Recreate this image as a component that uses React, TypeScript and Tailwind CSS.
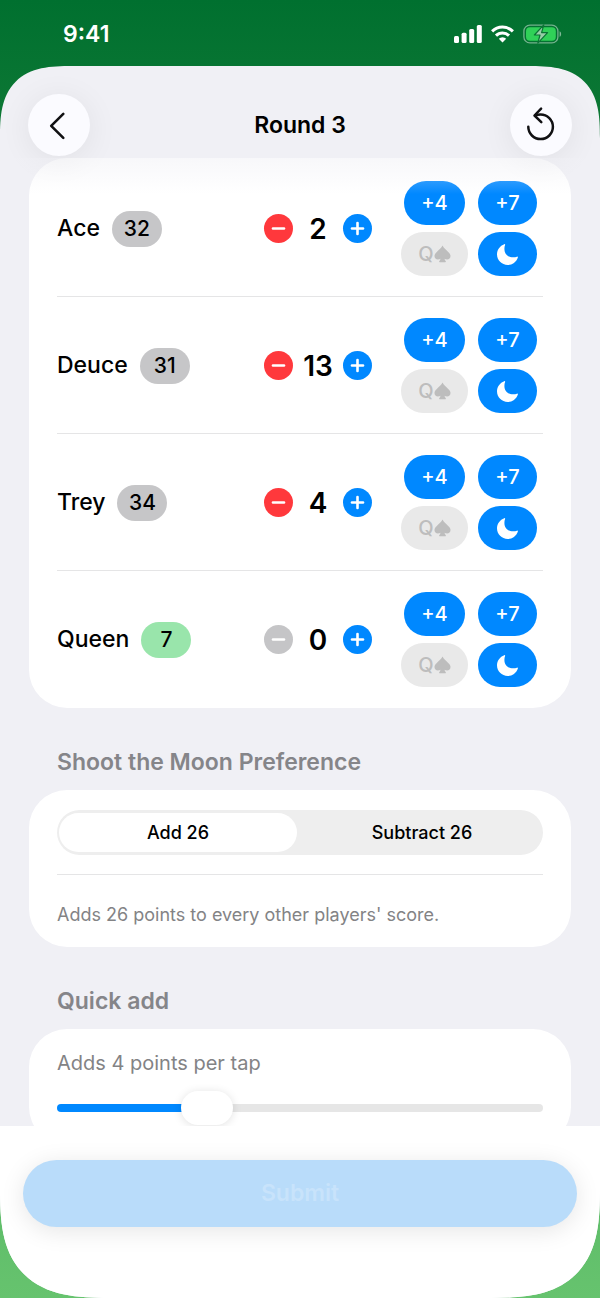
import React, { useState } from 'react';

type Player = {
  name: string;
  total: number;
  points: number;
};

type MoonPreference = 'add' | 'subtract';

const ROUND_POINTS = 26;
const QUEEN_POINTS = 13;
const QUICK_MIN = 2;
const QUICK_MAX = 9;

const INITIAL_PLAYERS: Player[] = [
  { name: 'Ace', total: 32, points: 2 },
  { name: 'Deuce', total: 31, points: 13 },
  { name: 'Trey', total: 34, points: 4 },
  { name: 'Queen', total: 7, points: 0 },
];

export default function App() {
  const [players, setPlayers] = useState<Player[]>(INITIAL_PLAYERS);
  const [moon, setMoon] = useState<MoonPreference>('add');
  const [quickAdd, setQuickAdd] = useState(4);

  const remaining = ROUND_POINTS - players.reduce((sum, p) => sum + p.points, 0);
  const lowest = Math.min(...players.map((p) => p.total));

  const addPoints = (name: string, amount: number) => {
    setPlayers(players.map((p) => (p.name === name ? { ...p, points: p.points + amount } : p)));
  };

  const shootMoon = (name: string) => {
    setPlayers(
      players.map((p) => {
        if (moon === 'add') return { ...p, points: p.name === name ? 0 : ROUND_POINTS };
        return { ...p, points: p.name === name ? -ROUND_POINTS : 0 };
      })
    );
  };

  // share of the track that lies left of the 52px thumb's centre
  const ratio = (quickAdd - QUICK_MIN) / (QUICK_MAX - QUICK_MIN);
  const fill = `calc((100% - 52px) * ${ratio} + 26px)`;

  return (
    <div className="flex flex-col h-screen bg-linear-to-b from-[#00702f] via-[#329a4d] to-[#66c36e] font-['Inter','Liberation_Sans',sans-serif] text-black">
      <StatusBar />

      <div className="flex-1 min-h-0 flex flex-col bg-[#f0f0f5] rounded-t-[72px] rounded-b-[110px] [corner-shape:superellipse(1.5)] overflow-hidden">
        <header className="relative z-10 h-[92px] shrink-0 flex items-center justify-between px-7 pt-[26px]">
          <RoundButton label="Back">
            <svg width="30" height="30" viewBox="0 0 30 30" fill="none" stroke="#111113" strokeWidth="2.6" strokeLinecap="round" strokeLinejoin="round">
              <path d="M19.3 3.8 L7.2 15.8 L19.3 27.8" />
            </svg>
          </RoundButton>
          <h1 className="text-[23px] font-semibold">Round 3</h1>
          <RoundButton label="Reset round" onClick={() => setPlayers(INITIAL_PLAYERS)}>
            <svg width="34" height="38" viewBox="0 0 34 38" fill="none" stroke="#111113" strokeWidth="2.5" strokeLinecap="round" strokeLinejoin="round">
              <path d="M4.3 20.8 A12.3 12.3 0 1 0 16.6 8.5 C14.7 8.5 12.7 8.8 11.1 9.4" />
              <path d="M17.1 2.7 L10.5 9.5 L17.3 16.1" />
            </svg>
          </RoundButton>
          <div className="absolute inset-x-0 top-full h-9 bg-linear-to-b from-[#f0f0f5]/50 to-transparent pointer-events-none" />
        </header>

        <main className="flex-1 min-h-0 overflow-y-auto [scrollbar-width:none] px-[29px] pb-8">
          <section className="bg-white rounded-[38px] px-7 pt-0.5">
            {players.map((player) => (
              <PlayerRow
                key={player.name}
                player={player}
                leading={player.total === lowest}
                quickAdd={quickAdd}
                remaining={remaining}
                onAdd={(amount) => addPoints(player.name, amount)}
                onMoon={() => shootMoon(player.name)}
              />
            ))}
          </section>

          <SectionTitle>Shoot the Moon Preference</SectionTitle>
          <section className="bg-white rounded-[38px] px-7 py-5">
            <div className="flex gap-1.5 h-[45px] px-0.5 py-[3px] rounded-full bg-[#eeeeee]">
              <Segment label="Add 26" checked={moon === 'add'} onChange={() => setMoon('add')} />
              <Segment label="Subtract 26" checked={moon === 'subtract'} onChange={() => setMoon('subtract')} />
            </div>
            <p className="mt-[19px] pt-7 border-t border-[#e5e5e6] text-lg leading-6 text-[#838385]">
              {moon === 'add' ? "Adds 26 points to every other players' score." : "Subtracts 26 points from the player's score."}
            </p>
          </section>

          <SectionTitle>Quick add</SectionTitle>
          <section className="bg-white rounded-[38px] px-7 py-5">
            <label htmlFor="quick-add" className="block text-xl leading-7 text-[#838385]">
              Adds {quickAdd} points per tap
            </label>
            <input
              id="quick-add"
              type="range"
              min={QUICK_MIN}
              max={QUICK_MAX}
              value={quickAdd}
              onChange={(e) => setQuickAdd(Number(e.target.value))}
              style={{ '--fill': fill } as React.CSSProperties}
              className="block w-full h-[34px] mt-3.5 appearance-none bg-transparent outline-none [&::-webkit-slider-runnable-track]:h-2 [&::-webkit-slider-runnable-track]:rounded-full [&::-webkit-slider-runnable-track]:bg-[linear-gradient(to_right,#0088ff_var(--fill),#e6e6e6_var(--fill))] [&::-webkit-slider-thumb]:appearance-none [&::-webkit-slider-thumb]:w-[52px] [&::-webkit-slider-thumb]:h-[34px] [&::-webkit-slider-thumb]:-mt-[13px] [&::-webkit-slider-thumb]:rounded-full [&::-webkit-slider-thumb]:bg-white [&::-webkit-slider-thumb]:shadow-[0_1px_10px_rgba(0,0,0,0.12)]"
            />
          </section>
        </main>

        <footer className="shrink-0 bg-white px-[23px] pt-[34px] pb-[71px]">
          <button
            disabled={remaining !== 0}
            className="w-full h-[67px] rounded-full bg-[#0088ff] text-[23px] font-semibold text-white shadow-[0_4px_24px_rgba(0,0,0,0.1)] disabled:bg-[#b9dcfa] disabled:text-[#c8e3fb]"
          >
            Submit
          </button>
        </footer>
      </div>
    </div>
  );
}

const StatusBar = () => (
  <div className="h-[66px] shrink-0 flex items-center justify-between pl-[63px] pr-[38px] pt-0.5 text-white">
    <span className="text-[23px] font-semibold">9:41</span>
    <div className="flex items-center gap-[9px]">
      <svg width="28" height="18" viewBox="0 0 28 18" fill="#fff">
        <rect x="0" y="11" width="5" height="7" rx="1.5" />
        <rect x="7.6" y="7.8" width="5" height="10.2" rx="1.5" />
        <rect x="15.2" y="4" width="5" height="14" rx="1.5" />
        <rect x="22.8" y="0" width="5" height="18" rx="1.5" />
      </svg>
      <svg width="23" height="18" viewBox="0 0 23 18" fill="none" stroke="#fff" strokeWidth="3">
        <path d="M1.1 6.4 A14.7 14.7 0 0 1 21.9 6.4" />
        <path d="M5 10.6 A9.2 9.2 0 0 1 18 10.6" />
        <path d="M7.8 13.7 A5.2 5.2 0 0 1 15.2 13.7 L11.5 17.6 Z" fill="#fff" stroke="none" />
      </svg>
      <svg width="39" height="20" viewBox="0 0 39 20" fill="none">
        <rect x="0.9" y="1.1" width="34" height="17.8" rx="6" stroke="#fff" strokeOpacity="0.45" strokeWidth="1.3" />
        <rect x="3" y="3.2" width="29.8" height="13.6" rx="4" fill="#30d158" />
        <path d="M36.6 7.2 C38.6 8 38.6 12 36.6 12.8 Z" fill="#fff" fillOpacity="0.5" />
        <path d="M20.8 0.8 L11.4 11 H17 L14.8 19.2 L24.6 8.6 H18.6 Z" fill="#97cda6" stroke="#0a7434" strokeWidth="1.2" strokeLinejoin="round" />
      </svg>
    </div>
  </div>
);

const RoundButton = ({ label, onClick, children }: { label: string; onClick?: () => void; children: React.ReactNode }) => (
  <button
    aria-label={label}
    onClick={onClick}
    className="w-[62px] h-[62px] rounded-full bg-[#fbfbff] flex items-center justify-center shadow-[0_4px_32px_rgba(0,0,0,0.07)]"
  >
    {children}
  </button>
);

const SectionTitle = ({ children }: { children: React.ReactNode }) => (
  <h2 className="px-7 pt-[38px] pb-3 text-[23px] leading-8 font-semibold text-[#858589]">{children}</h2>
);

const Segment = ({ label, checked, onChange }: { label: string; checked: boolean; onChange: () => void }) => (
  <label className={`relative flex-1 flex items-center justify-center rounded-full text-lg font-medium ${checked ? 'bg-white' : ''}`}>
    <input type="radio" name="moon-preference" checked={checked} onChange={onChange} className="sr-only" />
    {label}
  </label>
);

const StepButton = ({ kind, label, disabled, onClick }: { kind: 'minus' | 'plus'; label: string; disabled?: boolean; onClick: () => void }) => (
  <button
    aria-label={label}
    disabled={disabled}
    onClick={onClick}
    className={`w-[29px] h-[29px] rounded-full flex items-center justify-center disabled:bg-[#c5c5c7] ${kind === 'minus' ? 'bg-[#ff383c]' : 'bg-[#0088ff]'}`}
  >
    <svg width="15" height="15" viewBox="0 0 15 15" stroke="#fff" strokeWidth="2.6" strokeLinecap="round">
      <path d="M2 7.5 H13" />
      {kind === 'plus' && <path d="M7.5 2 V13" />}
    </svg>
  </button>
);

type PlayerRowProps = {
  player: Player;
  leading: boolean;
  quickAdd: number;
  remaining: number;
  onAdd: (amount: number) => void;
  onMoon: () => void;
};

const PlayerRow = ({ player, leading, quickAdd, remaining, onAdd, onMoon }: PlayerRowProps) => {
  const pill = 'h-11 rounded-full bg-[#0088ff] text-white text-xl font-medium flex items-center justify-center';

  return (
    <div className="flex items-center pt-[21px] pb-5 pr-[6px] border-b border-[#e5e5e6] last:border-transparent">
      <div className="flex-1 flex items-center gap-3">
        <span className="text-[23px] font-medium">{player.name}</span>
        <span className={`w-[50px] h-9 rounded-full flex items-center justify-center text-[21px] font-medium ${leading ? 'bg-[#99e5ab]' : 'bg-[#c6c6c8]'}`}>
          {player.total}
        </span>
      </div>

      <div className="flex items-center mr-[29px]">
        <StepButton kind="minus" label={`Take a point from ${player.name}`} disabled={player.points <= 0} onClick={() => onAdd(-1)} />
        <span className="w-[50px] text-center text-[28px] font-semibold">{player.points}</span>
        <StepButton kind="plus" label={`Give ${player.name} a point`} disabled={remaining <= 0} onClick={() => onAdd(1)} />
      </div>

      <div className="grid grid-cols-[67px_59px] gap-x-2.5 gap-y-[7px] justify-items-center">
        <button onClick={() => onAdd(quickAdd)} className={`${pill} w-[61px]`}>
          +{quickAdd}
        </button>
        <button onClick={() => onAdd(remaining)} className={`${pill} w-[59px]`}>
          +{remaining}
        </button>
        <button
          disabled={remaining < QUEEN_POINTS}
          onClick={() => onAdd(QUEEN_POINTS)}
          aria-label="Queen of spades"
          className={`${pill} w-[67px] disabled:bg-[#e9e9e9] disabled:text-[#bdbdbd]`}
        >
          Q
          <svg width="17" height="18" viewBox="0 0 17 18" fill="currentColor">
            <path d="M8.5 0.6 C9.6 3 12 4.9 14.2 6.9 C15.8 8.4 16.5 9.6 16.5 11.1 C16.5 13.2 15 14.5 13.1 14.5 C12 14.5 11.2 14.3 10.5 13.8 C10.7 14.8 11 15.4 11.6 15.9 C12.2 16.4 11.9 17.2 11.2 17.2 H5.8 C5.1 17.2 4.8 16.4 5.4 15.9 C6 15.4 6.3 14.8 6.5 13.8 C5.8 14.3 5 14.5 3.9 14.5 C2 14.5 0.5 13.2 0.5 11.1 C0.5 9.6 1.2 8.4 2.8 6.9 C5 4.9 7.4 3 8.5 0.6 Z" />
          </svg>
        </button>
        <button onClick={onMoon} aria-label="Shoot the moon" className={`${pill} w-[59px]`}>
          <svg width="23" height="23" viewBox="0 0 23 23" fill="currentColor">
            <path d="M8.2 1.2 C8.8 0.9 9.4 1.4 9.1 2.1 C8.6 3.3 8.4 4.6 8.4 5.9 C8.4 11 11.9 14.3 17.1 14.3 C18.6 14.3 19.9 14.1 20.9 13.7 C21.6 13.4 22.1 14 21.8 14.7 C20.2 19 16.4 21.9 11.8 21.9 C5.7 21.9 1 17.3 1 11.3 C1 6.8 4 2.7 8.2 1.2 Z" />
          </svg>
        </button>
      </div>
    </div>
  );
};
